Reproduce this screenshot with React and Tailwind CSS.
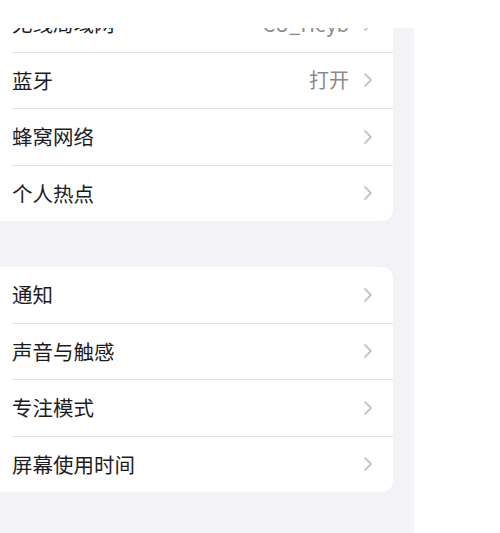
import { Fragment } from "react";

const groupOne = [
    { label: "无线局域网", value: "CU_Heyb" },
    { label: "蓝牙", value: "打开" },
    { label: "蜂窝网络" },
    { label: "个人热点" },
];

const groupTwo = [
    { label: "通知" },
    { label: "声音与触感" },
    { label: "专注模式" },
    { label: "屏幕使用时间" },
];

function Chevron() {
    return (
        <svg width="10" height="16" viewBox="0 0 10 16" fill="none" className="ml-[14px] shrink-0">
            <path d="M2 2 L8 8 L2 14" stroke="#c4c4c7" strokeWidth="1.8" strokeLinecap="round" strokeLinejoin="round" />
        </svg>
    );
}

function Row({ label, value }) {
    return (
        <div className="flex h-[55.5px] items-center pl-[12px] pr-[20px]">
            <span className="flex-1 text-[20.5px] text-[#1c1c1e]">{label}</span>
            {value && <span className="text-[20px] text-[#8a8a8e]">{value}</span>}
            <Chevron />
        </div>
    );
}

function Group({ items, className }) {
    return (
        <div className={`mr-[21px] rounded-r-[11px] bg-white ${className}`}>
            {items.map((it, i) => (
                <Fragment key={it.label}>
                    {i > 0 && <div className="ml-[12px] h-px bg-[#e2e2e5]" />}
                    <Row {...it} />
                </Fragment>
            ))}
        </div>
    );
}

export default function App() {
    return (
        <div
            className="flex h-[533px] w-[500px] flex-col bg-white"
            style={{ fontFamily: '"Noto Sans CJK SC", "Noto Sans", sans-serif' }}
        >
            <div className="h-[28px] shrink-0 bg-white" />
            <div className="flex flex-1">
                <div className="w-[414px] overflow-hidden bg-[#f2f2f7]">
                    <Group items={groupOne} className="-mt-[32px]" />
                    <Group items={groupTwo} className="mt-[46px]" />
                </div>
                <div className="flex-1 bg-white" />
            </div>
        </div>
    );
}
